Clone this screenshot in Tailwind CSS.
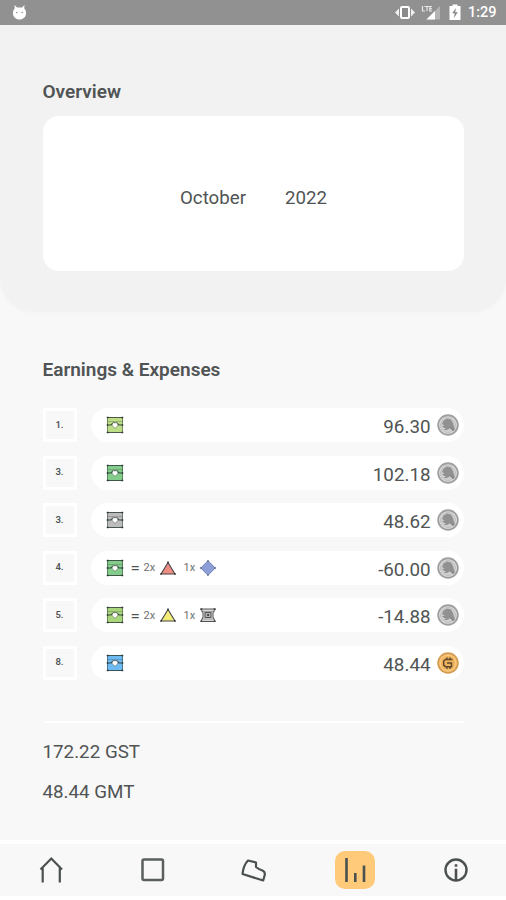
<!DOCTYPE html>
<html lang="en">
  <head>
    <meta charset="UTF-8" />
    <meta name="viewport" content="width=device-width, initial-scale=1.0" />
    <title>Overview</title>
    <script src="https://cdn.jsdelivr.net/npm/@tailwindcss/browser@4"></script>
  </head>

  <body class="w-[506px] h-[900px] overflow-hidden flex flex-col bg-[#f8f8f8] font-['Roboto',sans-serif] text-[#505454]">
    <!-- Shared icons -->
    <svg class="hidden">
      <symbol id="chest" viewBox="0 0 18 18">
        <rect x="1" y="1" width="16" height="16" fill="currentColor" />
        <path d="M1.500 1v16M16.500 1v16" stroke="#2d3a33" stroke-opacity=".5" />
        <path d="M1 1.500h16M1 16.500h16" stroke="#2d3a33" stroke-width="1.200" stroke-opacity=".8" />
        <path d="M1 5.500h16" stroke="#2d3a33" stroke-width=".7" stroke-opacity=".35" />
        <path d="M1 9h4l2-2h4l2 2h4" fill="none" stroke="#2d3a33" stroke-width="1.200" stroke-opacity=".85" />
        <path d="M6.200 8l1.300-1.200h3L11.800 8v1.700L9 12.300 6.200 9.700z" fill="#fff" stroke="#2d3a33" stroke-width=".7" stroke-opacity=".6" />
        <path d="M.7 .7h2v1.600h-2zM15.300 .7h2v1.600h-2zM.7 8.200h1.600v1.600H.7zM15.700 8.200h1.600v1.600h-1.600zM.7 15.700h2v1.600h-2zM15.300 15.700h2v1.600h-2z" fill="#26332d" fill-opacity=".8" />
      </symbol>
      <symbol id="gem-triangle" viewBox="0 0 16 14">
        <path d="M8 1.500L15 13H1z" fill="currentColor" stroke="#444" stroke-width="1.100" stroke-linejoin="round" />
        <path d="M7.200 .5h1.600v1.600H7.200zM.3 12.200h1.600v1.600H.3zM14.100 12.200h1.600v1.600h-1.600z" fill="#333" />
      </symbol>
      <symbol id="gst" viewBox="0 0 22 22">
        <circle cx="11" cy="11" r="9.800" fill="#e4e4e4" stroke="#a0a0a0" stroke-width="1.900" />
        <circle cx="11" cy="11" r="7.600" fill="#cfcfcf" stroke="#b8b8b8" stroke-width=".8" />
        <path d="M5 10l1.500-3.500L10 4.500l4 1 2 3.500.8 3 1.200 3.500-2 1.500-3-2.500-3 .5-3.500-1.500 1-2z" fill="#919191" />
        <path d="M5.500 12l3 1.500M7.500 15.500l4-.5M13.500 13l3 4" stroke="#858585" stroke-width="1" />
      </symbol>
    </svg>

    <!-- Status bar -->
    <header class="h-[25px] shrink-0 bg-[#919191] flex items-center justify-between pl-3 pr-2 text-white">
      <svg class="w-[15px] h-[17px]" viewBox="0 0 15 17" fill="#fff">
        <path d="M2.500 1l2.500 2.500h5L12.500 1l-.3 3.500c1.300 1 1.800 2.600 1.800 5C14 13 11 15.500 7.500 15.500S1 13 1 9.500c0-2.400.5-4 1.800-5z" />
        <circle cx="4.800" cy="8.500" r=".8" fill="#919191" />
        <circle cx="10.200" cy="8.500" r=".8" fill="#919191" />
      </svg>
      <div class="flex items-center">
        <svg class="w-5 h-[17px]" viewBox="0 0 20 17">
          <path d="M4 4.500v8L0 8.500zM16 4.500v8L20 8.500z" fill="#f0f0f0" />
          <rect x="6" y="3" width="8" height="11" rx="1" fill="#8b8b8b" stroke="#fff" stroke-width="2" />
        </svg>
        <svg class="w-5 h-[17px] ml-1.5" viewBox="0 0 20 17">
          <path d="M1.500 2v5H4M3.500 2.500H8M6 2v5M11 2.500H8.800v4.500h2.500M8.800 4.700h2" stroke="#e8e8e8" stroke-width="1.200" fill="none" />
          <path d="M19 2v13.500H5.500z" fill="#b4b4b4" />
          <path d="M14 7v8.500H5.500z" fill="#fff" />
        </svg>
        <svg class="w-3 h-[17px] ml-2" viewBox="0 0 12 17">
          <path d="M3.500 .5h5V2H11.500v14H.5V2h3z" fill="#fff" />
          <path d="M7 4L3.200 9.300h2.500L4.800 14l4-5.700H6.200z" fill="#858585" />
        </svg>
        <span class="ml-[7px] w-[30px] pt-px text-[14.500px] leading-none font-medium whitespace-nowrap">1:29</span>
      </div>
    </header>

    <!-- Overview -->
    <section class="h-[287px] shrink-0 px-[42.500px] pt-[55px] bg-[#f2f2f2] rounded-b-[34px] shadow-[0_2px_5px_rgba(0,0,0,0.015)]">
      <h2 class="text-[19px] leading-6 font-semibold">Overview</h2>
      <div class="mt-3 h-[155px] rounded-2xl bg-white flex items-center justify-center gap-[39px] pt-[10px] pl-px text-[18.700px]">
        <span>October</span>
        <span>2022</span>
      </div>
    </section>

    <!-- Earnings and expenses -->
    <main class="flex-1 px-[42.500px] pt-[46px]">
      <h2 class="text-[19px] leading-6 font-semibold">Earnings &amp; Expenses</h2>

      <ul class="mt-[26px] flex flex-col gap-[13.500px]">
        <li class="flex gap-[14px] h-[34px]">
          <div class="w-[34px] border-[3px] border-white flex items-center justify-center text-[9.500px] font-semibold">1.</div>
          <div class="flex-1 flex items-center rounded-full bg-white pl-[15px] pr-[5px]">
            <svg class="w-[18px] h-[18px] text-[#bddd87]"><use href="#chest" /></svg>
            <span class="ml-auto pt-[5px] text-[18.800px]">96.30</span>
            <svg class="w-[22px] h-[22px] ml-1.5"><use href="#gst" /></svg>
          </div>
        </li>
        <li class="flex gap-[14px] h-[34px]">
          <div class="w-[34px] border-[3px] border-white flex items-center justify-center text-[9.500px] font-semibold">3.</div>
          <div class="flex-1 flex items-center rounded-full bg-white pl-[15px] pr-[5px]">
            <svg class="w-[18px] h-[18px] text-[#83cc8b]"><use href="#chest" /></svg>
            <span class="ml-auto pt-[5px] text-[18.800px]">102.18</span>
            <svg class="w-[22px] h-[22px] ml-1.5"><use href="#gst" /></svg>
          </div>
        </li>
        <li class="flex gap-[14px] h-[34px]">
          <div class="w-[34px] border-[3px] border-white flex items-center justify-center text-[9.500px] font-semibold">3.</div>
          <div class="flex-1 flex items-center rounded-full bg-white pl-[15px] pr-[5px]">
            <svg class="w-[18px] h-[18px] text-[#bcbcbc]"><use href="#chest" /></svg>
            <span class="ml-auto pt-[5px] text-[18.800px]">48.62</span>
            <svg class="w-[22px] h-[22px] ml-1.5"><use href="#gst" /></svg>
          </div>
        </li>
        <li class="flex gap-[14px] h-[34px]">
          <div class="w-[34px] border-[3px] border-white flex items-center justify-center text-[9.500px] font-semibold">4.</div>
          <div class="flex-1 flex items-center rounded-full bg-white pl-[15px] pr-[5px]">
            <svg class="w-[18px] h-[18px] text-[#83cc8b]"><use href="#chest" /></svg>
            <span class="ml-[7px] w-[13px] pt-[3px] text-[17px]">=</span>
            <span class="w-4 pt-0.5 text-[11px] text-[#707070]">2x</span>
            <svg class="w-4 h-3.5 text-[#ee8c86]"><use href="#gem-triangle" /></svg>
            <span class="ml-2 w-4 pt-0.5 text-[11px] text-[#707070]">1x</span>
            <svg class="w-4 h-4" viewBox="0 0 16 16">
              <path d="M8 .8L15.200 8 8 15.200.8 8z" fill="#8e9fd8" stroke="#6f7fae" stroke-width="1" />
              <path d="M7.300 .2h1.400v1.400H7.300zM.2 7.300h1.400v1.400H.2zM14.400 7.300h1.400v1.400h-1.400zM7.300 14.400h1.400v1.400H7.300z" fill="#4a5570" />
            </svg>
            <span class="ml-auto pt-[5px] text-[18.800px]">-60.00</span>
            <svg class="w-[22px] h-[22px] ml-1.5"><use href="#gst" /></svg>
          </div>
        </li>
        <li class="flex gap-[14px] h-[34px]">
          <div class="w-[34px] border-[3px] border-white flex items-center justify-center text-[9.500px] font-semibold">5.</div>
          <div class="flex-1 flex items-center rounded-full bg-white pl-[15px] pr-[5px]">
            <svg class="w-[18px] h-[18px] text-[#a9d67c]"><use href="#chest" /></svg>
            <span class="ml-[7px] w-[13px] pt-[3px] text-[17px]">=</span>
            <span class="w-4 pt-0.5 text-[11px] text-[#707070]">2x</span>
            <svg class="w-4 h-3.5 text-[#f3ec78]"><use href="#gem-triangle" /></svg>
            <span class="ml-2 w-4 pt-0.5 text-[11px] text-[#707070]">1x</span>
            <svg class="w-4 h-4" viewBox="0 0 16 16" fill="none" stroke="#555">
              <path d="M1 2h14l-2 4v4l2 4.500H1L3 10V6z" fill="#d6d6d6" stroke-width="1" />
              <path d="M1 4.500h14M1 12h14" stroke-opacity=".5" stroke-width=".8" />
              <rect x="5" y="5.500" width="6" height="5" fill="#b0b0b0" />
              <path d="M.3 1.300h2v1.600h-2zM13.700 1.300h2v1.600h-2zM.3 13.500h2v1.600h-2zM13.700 13.500h2v1.600h-2zM7.200 7h1.800v2H7.200z" fill="#444" stroke="none" />
            </svg>
            <span class="ml-auto pt-[5px] text-[18.800px]">-14.88</span>
            <svg class="w-[22px] h-[22px] ml-1.5"><use href="#gst" /></svg>
          </div>
        </li>
        <li class="flex gap-[14px] h-[34px]">
          <div class="w-[34px] border-[3px] border-white flex items-center justify-center text-[9.500px] font-semibold">8.</div>
          <div class="flex-1 flex items-center rounded-full bg-white pl-[15px] pr-[5px]">
            <svg class="w-[18px] h-[18px] text-[#6db9f2]"><use href="#chest" /></svg>
            <span class="ml-auto pt-[5px] text-[18.800px]">48.44</span>
            <svg class="w-[22px] h-[22px] ml-1.5" viewBox="0 0 22 22" fill="none">
              <circle cx="11" cy="11" r="9.900" fill="#f5c173" stroke="#d39c50" stroke-width="1.700" />
              <circle cx="11" cy="11" r="7.700" fill="#f0b35c" stroke="#f9cf90" stroke-width=".8" />
              <path d="M15.500 7.500h-7L6.700 9v4.200l1.800 1.500h6v-3.700H10M10 5.500v2M13 5.500v2M10 14.700v2M13 14.700v2" stroke="#5d4a2e" stroke-width="1.500" />
            </svg>
          </div>
        </li>
      </ul>

      <div class="mt-[41px] border-t-2 border-white pt-[17px] text-[18.800px] leading-6">
        <p>172.22 GST</p>
        <p class="mt-4">48.44 GMT</p>
      </div>
    </main>

    <!-- Bottom navigation -->
    <nav class="h-[60px] shrink-0 border-t-4 border-b-4 border-white pl-0.5 grid grid-cols-5 items-center justify-items-center">
      <svg class="w-7 h-7" viewBox="0 0 28 28" fill="none" stroke="#4b5050" stroke-width="2.200">
        <path d="M2.500 13.500L13.300 2.500 24 13.500M4.700 11.500V26.500M21.800 11.500V26.500" />
      </svg>
      <svg class="w-7 h-7" viewBox="0 0 28 28" fill="none" stroke="#5a5e5e" stroke-width="2.500">
        <rect x="3.500" y="3.500" width="20.500" height="20.500" rx="1.500" />
      </svg>
      <svg class="w-7 h-7" viewBox="0 0 28 28" fill="none" stroke="#4b5050" stroke-width="2.200" stroke-linejoin="round">
        <path d="M2.500 18Q3.500 9 8 4.500l8 2V11q3 2.500 6.500 3.500q3 1.500 2.200 4.500l-1.500 5.500z" />
      </svg>
      <div class="w-10 h-[38px] rounded-[10px] bg-[#ffca7a] flex items-center justify-center">
        <svg class="w-6 h-6" viewBox="0 0 24 24" stroke="#4b5050" stroke-width="2.600">
          <path d="M3.500 0v24M12.300 15v9M21 7.500v16.500" />
        </svg>
      </div>
      <svg class="w-7 h-7" viewBox="0 0 28 28" fill="none" stroke="#4b5050" stroke-width="2.400">
        <circle cx="14" cy="14" r="10.500" />
        <path d="M14 12.800V24M14 8.200v2.600" stroke-width="2.600" />
      </svg>
    </nav>
  </body>
</html>
